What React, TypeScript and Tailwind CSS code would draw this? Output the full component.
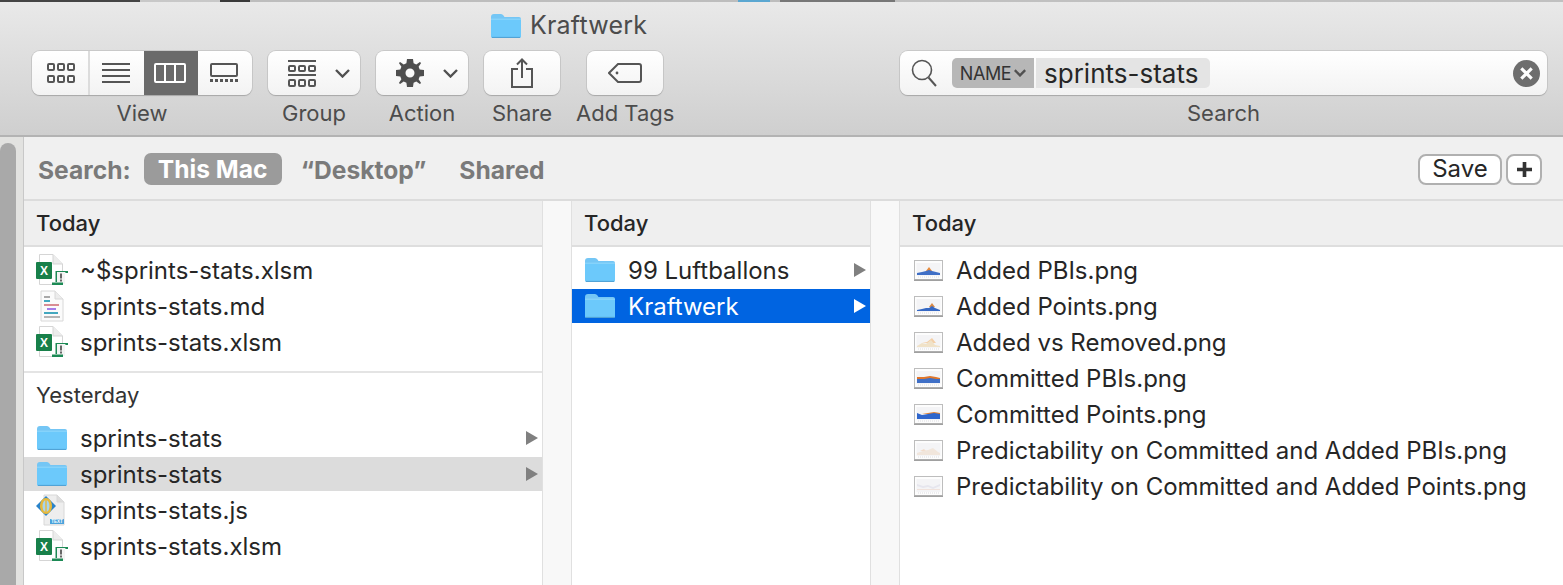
import React from 'react'

const font = { fontFamily: 'Inter, "Liberation Sans", sans-serif' }

function Folder({ className = 'w-[30px] h-[24px]' }: { className?: string }) {
  return (
    <svg viewBox="0 0 30 24" className={className}>
      <path d="M0 3 Q0 0 3 0 H10 Q11.5 0 12.5 1.5 L13.5 3 H28 Q30 3 30 5 V22 Q30 24 28 24 H2 Q0 24 0 22 Z" fill="#74c6f5" />
      <path d="M0 6 Q0 5 1 5 H29 Q30 5 30 6 V22 Q30 24 28 24 H2 Q0 24 0 22 Z" fill="#6cc9fb" />
      <path d="M0 5.2 H30" stroke="#9adbfb" strokeWidth="0.8" />
      <path d="M1 23.4 H29" stroke="#4f9fd2" strokeWidth="1" />
    </svg>
  )
}

function Excel() {
  return (
    <svg viewBox="0 0 32 32" className="w-8 h-8">
      <path d="M3.5 0.5 H17 L26.5 10 V30.5 H3.5 Z" fill="#fff" stroke="#d5d5d5" />
      <path d="M17 0.5 V10 H26.5" fill="#ececec" stroke="#d5d5d5" />
      <rect x="0" y="8" width="16" height="17" rx="1" fill="#18804a" />
      <text x="8" y="20.5" textAnchor="middle" fontSize="12" fontWeight="700" fill="#fff" fontFamily="Liberation Sans">X</text>
      <rect x="20" y="17" width="9" height="13" fill="#f4f4f4" />
      <path d="M20 17 H32 V19 H30 Q29 18.4 29 18 H20 Z M19.5 17 H21 V28 H19.5 Z M16 28.5 H27 V31 H16 Z" fill="#1c8a55" />
      <rect x="24" y="19.5" width="2" height="5" fill="#666" />
      <rect x="24" y="25.5" width="2" height="2" fill="#666" />
    </svg>
  )
}

function Markdown() {
  return (
    <svg viewBox="0 0 32 32" className="w-8 h-8">
      <path d="M5 1 H19 L27 9 V31 H5 Z" fill="#fbfbfb" stroke="#d8d8d8" />
      <path d="M19 1 V9 H27" fill="#ececec" stroke="#d8d8d8" />
      <rect x="8" y="6" width="6" height="2" fill="#a9a9a9" />
      <rect x="8" y="10" width="6" height="2" fill="#43a8bf" />
      <rect x="8" y="14" width="15" height="2" fill="#d98d93" />
      <rect x="11" y="18" width="9" height="2" fill="#a67ce8" />
      <rect x="8" y="22" width="14" height="2" fill="#43a8bf" />
      <rect x="8" y="26" width="16" height="2" fill="#b5b5b5" />
    </svg>
  )
}

function Script() {
  return (
    <svg viewBox="0 0 32 32" className="w-8 h-8">
      <path d="M8 1 H21 L28 8 V31 H8 Z" fill="#eeeeee" stroke="#d8d8d8" />
      <path d="M21 1 V8 H28" fill="#dddddd" stroke="#d8d8d8" />
      <path d="M0 12 L10 2 L20 12 L10 22 Z" fill="#2a83c9" />
      <ellipse cx="10" cy="12" rx="6" ry="8" fill="#e8b93a" />
      <ellipse cx="10" cy="12" rx="3.5" ry="6" fill="#a8d4ee" />
      <path d="M10 6 V18" stroke="#e8b93a" strokeWidth="1.4" />
      <rect x="14" y="25" width="14" height="5" fill="#4aa3dc" />
      <text x="21" y="29.3" textAnchor="middle" fontSize="4.5" fontWeight="700" fill="#fff" fontFamily="Liberation Sans">TEXT</text>
    </svg>
  )
}

const chartFills: Record<string, [string, string]> = {
  a: ['#3f6fc6', '#e58a3c'],
  b: ['#3568c4', '#d88945'],
  c: ['#f0e2c8', '#f3cfa8'],
  d: ['#3f6fc6', '#e0762a'],
  e: ['#2f66cc', '#e08232'],
  f: ['#f1e6dc', '#f2dccb'],
  g: ['#e6e6ee', '#f0e2dc'],
}

const chartPaths: Record<string, [string, string]> = {
  a: ['M3 13 L8 12 L12 11 L15 10 L18 11 L22 12 L26 13 V15 H3 Z', 'M12 11 L15 7 L18 11 Z'],
  b: ['M3 14 L8 13 L12 12 L15 12 L18 10 L21 12 L26 14 V15 H3 Z', 'M15 11 L18 7 L21 11 Z'],
  c: ['M3 14 L8 11 L12 12 L17 8 L21 13 L26 14 V15 H3 Z', 'M8 11 L13 10 L18 6 L22 11 Z'],
  d: ['M3 11 L10 11 L16 10 L22 11 L26 11 V15 H3 Z', 'M3 9 L10 9 L16 8 L22 9 L26 10 V12 H3 Z'],
  e: ['M3 9 L8 11 L14 10 L20 9 L26 10 V15 H3 Z', 'M8 10 L14 9 L20 8 L26 9 V10 H8 Z'],
  f: ['M3 13 L9 11 L14 10 L19 8 L24 12 L26 13 V15 H3 Z', 'M6 11 L10 9 L12 11 Z'],
  g: ['M3 8 L9 10 L14 9 L19 11 L26 8 V10 L19 13 L14 11 L9 12 L3 10 Z', 'M3 13 H26 V14 H3 Z'],
}

function Chart({ kind }: { kind: string }) {
  const [fa, fb] = chartFills[kind]
  const [pa, pb] = chartPaths[kind]
  return (
    <svg viewBox="0 0 29 21" className="w-[29px] h-[21px]">
      <rect x="0.5" y="0.5" width="28" height="19" fill="#fdfdfd" stroke="#bdbdbd" />
      <rect x="0" y="19.5" width="29" height="1.5" fill="#a0a0a0" />
      <rect x="2.5" y="3" width="24" height="13" fill="#f4f4f6" />
      <path d={pb} fill={fb} />
      <path d={pa} fill={fa} />
      <path d="M4 17 H25" stroke="#c9c9d2" strokeWidth="0.6" strokeDasharray="1 1" />
    </svg>
  )
}

function Row({
  icon,
  label,
  arrow,
  selected,
  active,
}: {
  icon: React.ReactNode
  label: string
  arrow?: boolean
  selected?: boolean
  active?: boolean
}) {
  const bg = selected ? 'bg-[#0064e1] text-white' : active ? 'bg-[#dcdcdc] text-[#262626]' : 'text-[#262626]'
  return (
    <div className="h-9 py-px">
      <div className={`flex items-center h-full ${bg}`}>
        <div className="w-[56px] shrink-0 flex justify-center">
          {icon}
        </div>
        <span className="text-[24px] leading-8 pt-[2px] whitespace-nowrap">{label}</span>
        {arrow && (
          <svg viewBox="0 0 12 14" className={`w-3 h-3.5 ml-auto mr-1 ${selected ? 'fill-white' : 'fill-[#808080]'}`}>
            <path d="M0 0 L12 7 L0 14 Z" />
          </svg>
        )}
      </div>
    </div>
  )
}

function ColumnHeader() {
  return (
    <div className="h-[46px] shrink-0 bg-[#efefef] border-b-2 border-[#dedede] pl-[12px] flex items-center text-[22px] font-medium text-[#262626]">
      Today
    </div>
  )
}

function ToolButton({ className = '', children }: { className?: string; children: React.ReactNode }) {
  return (
    <div className={`h-[44px] rounded-[8px] bg-gradient-to-b from-white to-[#f3f3f3] shadow-[0_1px_1px_#a8a8a8,0_0_0_1px_#c9c9c9] flex items-center justify-center ${className}`}>
      {children}
    </div>
  )
}

function Chevron({ className = 'w-[15px] h-[9px]', weight = '2.4' }: { className?: string; weight?: string }) {
  return (
    <svg viewBox="0 0 15 9" className={className} fill="none" stroke="#505050" strokeWidth={weight}>
      <path d="M1 1 L7.5 7.5 L14 1" />
    </svg>
  )
}

function Gear() {
  return (
    <svg viewBox="0 0 28 28" className="w-7 h-7" fill="#4e4e4e">
      <path
        fillRule="evenodd"
        d="M11 0 H17 L17.6 4.3 L20.3 5.4 L23.9 2.9 L25.1 4.1 L25.1 4.1 L22.6 7.7 L23.7 10.4 L28 11 V17 L23.7 17.6 L22.6 20.3 L25.1 23.9 L23.9 25.1 L20.3 22.6 L17.6 23.7 L17 28 H11 L10.4 23.7 L7.7 22.6 L4.1 25.1 L2.9 23.9 L5.4 20.3 L4.3 17.6 L0 17 V11 L4.3 10.4 L5.4 7.7 L2.9 4.1 L4.1 2.9 L7.7 5.4 L10.4 4.3 Z M14 9.5 A4.5 4.5 0 1 0 14 18.5 A4.5 4.5 0 1 0 14 9.5 Z"
      />
    </svg>
  )
}

function ToolLabel({ children }: { children: React.ReactNode }) {
  return <div className="text-[22px] leading-[26px] mt-[5px] text-[#4c4c4c] text-center whitespace-nowrap">{children}</div>
}

function Toolbar() {
  return (
    <div className="h-[135px] shrink-0 bg-gradient-to-b from-[#e9e9e9] to-[#cfcfcf] border-b-2 border-[#b3b3b3] flex flex-col">
      <div className="h-[46px] flex items-center gap-[9px] pl-[491px] pt-[2px] text-[#4c4c4c] text-[25px] tracking-[0.2px]">
        <Folder />
        <span>Kraftwerk</span>
      </div>
      <div className="flex pl-[32px] pt-[3px] pr-[16px]">
        <div className="flex flex-col">
          <ToolButton className="w-[220px] !justify-start overflow-hidden">
            <div className="w-[58px] h-full border-r-2 border-[#dcdcdc] flex items-center justify-center pl-px">
              <svg viewBox="0 0 28 20" className="w-7 h-5" fill="none" stroke="#555" strokeWidth="2">
                <rect x="1" y="1" width="6" height="6" rx="1" /><rect x="11" y="1" width="6" height="6" rx="1" /><rect x="21" y="1" width="6" height="6" rx="1" />
                <rect x="1" y="13" width="6" height="6" rx="1" /><rect x="11" y="13" width="6" height="6" rx="1" /><rect x="21" y="13" width="6" height="6" rx="1" />
              </svg>
            </div>
            <div className="w-[54px] h-full flex items-center justify-center pr-[2px]">
              <svg viewBox="0 0 28 20" className="w-7 h-5" stroke="#555" strokeWidth="2">
                <path d="M0 1 H28 M0 7 H28 M0 13 H28 M0 19 H28" />
              </svg>
            </div>
            <div className="w-[54px] h-[46px] bg-[#6a6a6a] flex items-center justify-center pr-[2px]">
              <svg viewBox="0 0 32 20" className="w-8 h-5" fill="none" stroke="#fff" strokeWidth="2">
                <rect x="1" y="1" width="30" height="18" rx="1" /><path d="M11 1 V19 M21 1 V19" />
              </svg>
            </div>
            <div className="w-[54px] h-full flex items-center justify-center pr-[2px]">
              <svg viewBox="0 0 28 20" className="w-7 h-5" fill="#555">
                <rect x="1" y="1" width="26" height="12" rx="1" fill="none" stroke="#555" strokeWidth="2" />
                <rect x="0" y="16" width="3" height="3" /><rect x="5" y="16" width="3" height="3" /><rect x="10" y="16" width="3" height="3" /><rect x="15" y="16" width="3" height="3" /><rect x="20" y="16" width="3" height="3" /><rect x="25" y="16" width="3" height="3" />
              </svg>
            </div>
          </ToolButton>
          <ToolLabel>View</ToolLabel>
        </div>
        <div className="flex flex-col ml-[16px]">
          <ToolButton className="w-[92px] gap-[19px] pl-[9px]">
            <svg viewBox="0 0 28 27" className="w-7 h-[27px]" fill="none" stroke="#555" strokeWidth="2">
              <path d="M0 1 H28 M0 15 H28" />
              <rect x="1" y="6" width="6" height="5" rx="1" /><rect x="11" y="6" width="6" height="5" rx="1" /><rect x="21" y="6" width="6" height="5" rx="1" />
              <rect x="1" y="20" width="6" height="6" rx="1" /><rect x="11" y="20" width="6" height="6" rx="1" /><rect x="21" y="20" width="6" height="6" rx="1" />
            </svg>
            <Chevron />
          </ToolButton>
          <ToolLabel>Group</ToolLabel>
        </div>
        <div className="flex flex-col ml-[16px]">
          <ToolButton className="w-[92px] gap-[19px] pl-[9px]">
            <Gear />
            <Chevron />
          </ToolButton>
          <ToolLabel>Action</ToolLabel>
        </div>
        <div className="flex flex-col ml-[16px]">
          <ToolButton className="w-[76px]">
            <svg viewBox="0 0 22 30" className="w-[22px] h-[30px]" fill="none" stroke="#555" strokeWidth="2">
              <path d="M7 11 H1 V29 H21 V11 H15 M11 20 V1.5 M6 6.5 L11 1.5 L16 6.5" />
            </svg>
          </ToolButton>
          <ToolLabel>Share</ToolLabel>
        </div>
        <div className="flex flex-col items-center ml-[16px]">
          <ToolButton className="w-[76px]">
            <svg viewBox="0 0 34 20" className="w-[34px] h-5" fill="none" stroke="#555" strokeWidth="2">
              <path d="M10 1 H31 Q33 1 33 3 V17 Q33 19 31 19 H10 L1 10 Z" />
              <circle cx="9" cy="10" r="1.4" fill="#555" stroke="none" />
            </svg>
          </ToolButton>
          <ToolLabel>Add Tags</ToolLabel>
        </div>
        <div className="flex flex-col ml-auto w-[647px]">
          <ToolButton className="w-full !justify-start pl-[11px] pr-[7px]">
            <svg viewBox="0 0 26 28" className="w-[26px] h-[28px]" fill="none" stroke="#555" strokeWidth="1.6">
              <circle cx="11" cy="11" r="9.5" /><path d="M17.5 18.5 L25 27" strokeWidth="2" />
            </svg>
            <div className="ml-[15px] h-[30px] w-[82px] rounded-l-[5px] bg-[#b7b7b7] flex items-center justify-center gap-[3px] text-[18px] text-[#333]">
              <span className="tracking-[-0.4px]">NAME</span>
              <Chevron className="w-[12px] h-[8px]" weight="3" />
            </div>
            <div className="ml-[2px] h-[30px] w-[174px] rounded-r-[5px] bg-[#e4e4e4] flex items-center pl-[8px] text-[26px] text-[#262626]">
              sprints-stats
            </div>
            <div className="ml-auto w-[27px] h-[27px] rounded-full bg-[#6e6e6e] flex items-center justify-center">
              <svg viewBox="0 0 10 10" className="w-[13px] h-[13px]" stroke="#fff" strokeWidth="2.4">
                <path d="M1 1 L9 9 M9 1 L1 9" />
              </svg>
            </div>
          </ToolButton>
          <ToolLabel>Search</ToolLabel>
        </div>
      </div>
    </div>
  )
}

function ScopeBar() {
  return (
    <div className="h-[64px] shrink-0 pt-[2px] bg-[#f0f0f0] border-b-2 border-[#dcdcdc] flex items-center pl-[14px] pr-[21px] text-[24.6px] font-bold text-[#7a7a7a]">
      <span className="pt-[2px]">Search:</span>
      <span className="ml-[13px] h-[32px] w-[138px] rounded-[7px] bg-[#9b9b9b] text-white flex items-center justify-center pt-px">This Mac</span>
      <span className="ml-[19px] pt-[2px]">“Desktop”</span>
      <span className="ml-[33px] pt-[2px]">Shared</span>
      <div className="ml-auto flex gap-[4px] font-normal text-[24px] text-[#262626]">
        <div className="w-[84px] h-[31px] rounded-[8px] border-2 border-[#b0b0b0] bg-white flex items-center justify-center">Save</div>
        <div className="w-[36px] h-[31px] rounded-[8px] border-2 border-[#b0b0b0] bg-white flex items-center justify-center">
          <svg viewBox="0 0 14 14" className="w-[15px] h-[15px]" stroke="#333" strokeWidth="3.4">
            <path d="M7 0 V14 M0 7 H14" />
          </svg>
        </div>
      </div>
    </div>
  )
}

function BehindWindow() {
  return (
    <div className="h-[2px] shrink-0 flex bg-[#c0c0c0]">
      <div className="w-[140px] bg-[#444]" />
      <div className="w-[80px] bg-[#c8c8c8]" />
      <div className="w-[30px] bg-[#3a3a3a]" />
      <div className="w-[488px] bg-[#bdbdbd]" />
      <div className="w-[32px] bg-[#5ba7d1]" />
      <div className="w-[10px] bg-[#bdbdbd]" />
      <div className="w-[115px] bg-[#777]" />
    </div>
  )
}

export default function App() {
  return (
    <div className="w-[1563px] h-[585px] overflow-hidden flex flex-col bg-white" style={font}>
      <BehindWindow />
      <Toolbar />
      <div className="flex-1 flex min-h-0">
        <div className="w-[24px] shrink-0 flex bg-[#e2e2e0] border-r border-[#c8c8c8]">
          <div className="w-[16px] bg-[#a9a9a9] rounded-t-[8px] mt-[6px]" />
        </div>
        <div className="flex-1 flex flex-col min-w-0">
          <ScopeBar />
          <div className="flex-1 flex min-h-0">
            <div className="w-[519px] shrink-0 flex flex-col border-r border-[#e0e0e0]">
              <ColumnHeader />
              <div className="pt-[5px]">
                <Row icon={<Excel />} label="~$sprints-stats.xlsm" />
                <Row icon={<Markdown />} label="sprints-stats.md" />
                <Row icon={<Excel />} label="sprints-stats.xlsm" />
              </div>
              <div className="mt-[11px] border-t-2 border-[#e4e4e4] h-[49px] pl-[12px] pb-[3px] flex items-center text-[22px] text-[#333]">Yesterday</div>
              <Row icon={<Folder />} label="sprints-stats" arrow />
              <Row icon={<Folder />} label="sprints-stats" arrow active />
              <Row icon={<Script />} label="sprints-stats.js" />
              <Row icon={<Excel />} label="sprints-stats.xlsm" />
            </div>
            <div className="w-[29px] shrink-0 bg-[#f8f8f8] border-r border-[#e0e0e0]" />
            <div className="w-[299px] shrink-0 flex flex-col border-r border-[#e0e0e0]">
              <ColumnHeader />
              <div className="pt-[5px]">
                <Row icon={<Folder />} label="99 Luftballons" arrow />
                <Row icon={<Folder />} label="Kraftwerk" arrow selected />
              </div>
            </div>
            <div className="w-[29px] shrink-0 bg-[#f8f8f8] border-r border-[#e0e0e0]" />
            <div className="flex-1 flex flex-col min-w-0">
              <ColumnHeader />
              <div className="pt-[5px]">
                <Row icon={<Chart kind="a" />} label="Added PBIs.png" />
                <Row icon={<Chart kind="b" />} label="Added Points.png" />
                <Row icon={<Chart kind="c" />} label="Added vs Removed.png" />
                <Row icon={<Chart kind="d" />} label="Committed PBIs.png" />
                <Row icon={<Chart kind="e" />} label="Committed Points.png" />
                <Row icon={<Chart kind="f" />} label="Predictability on Committed and Added PBIs.png" />
                <Row icon={<Chart kind="g" />} label="Predictability on Committed and Added Points.png" />
              </div>
            </div>
          </div>
        </div>
      </div>
    </div>
  )
}
